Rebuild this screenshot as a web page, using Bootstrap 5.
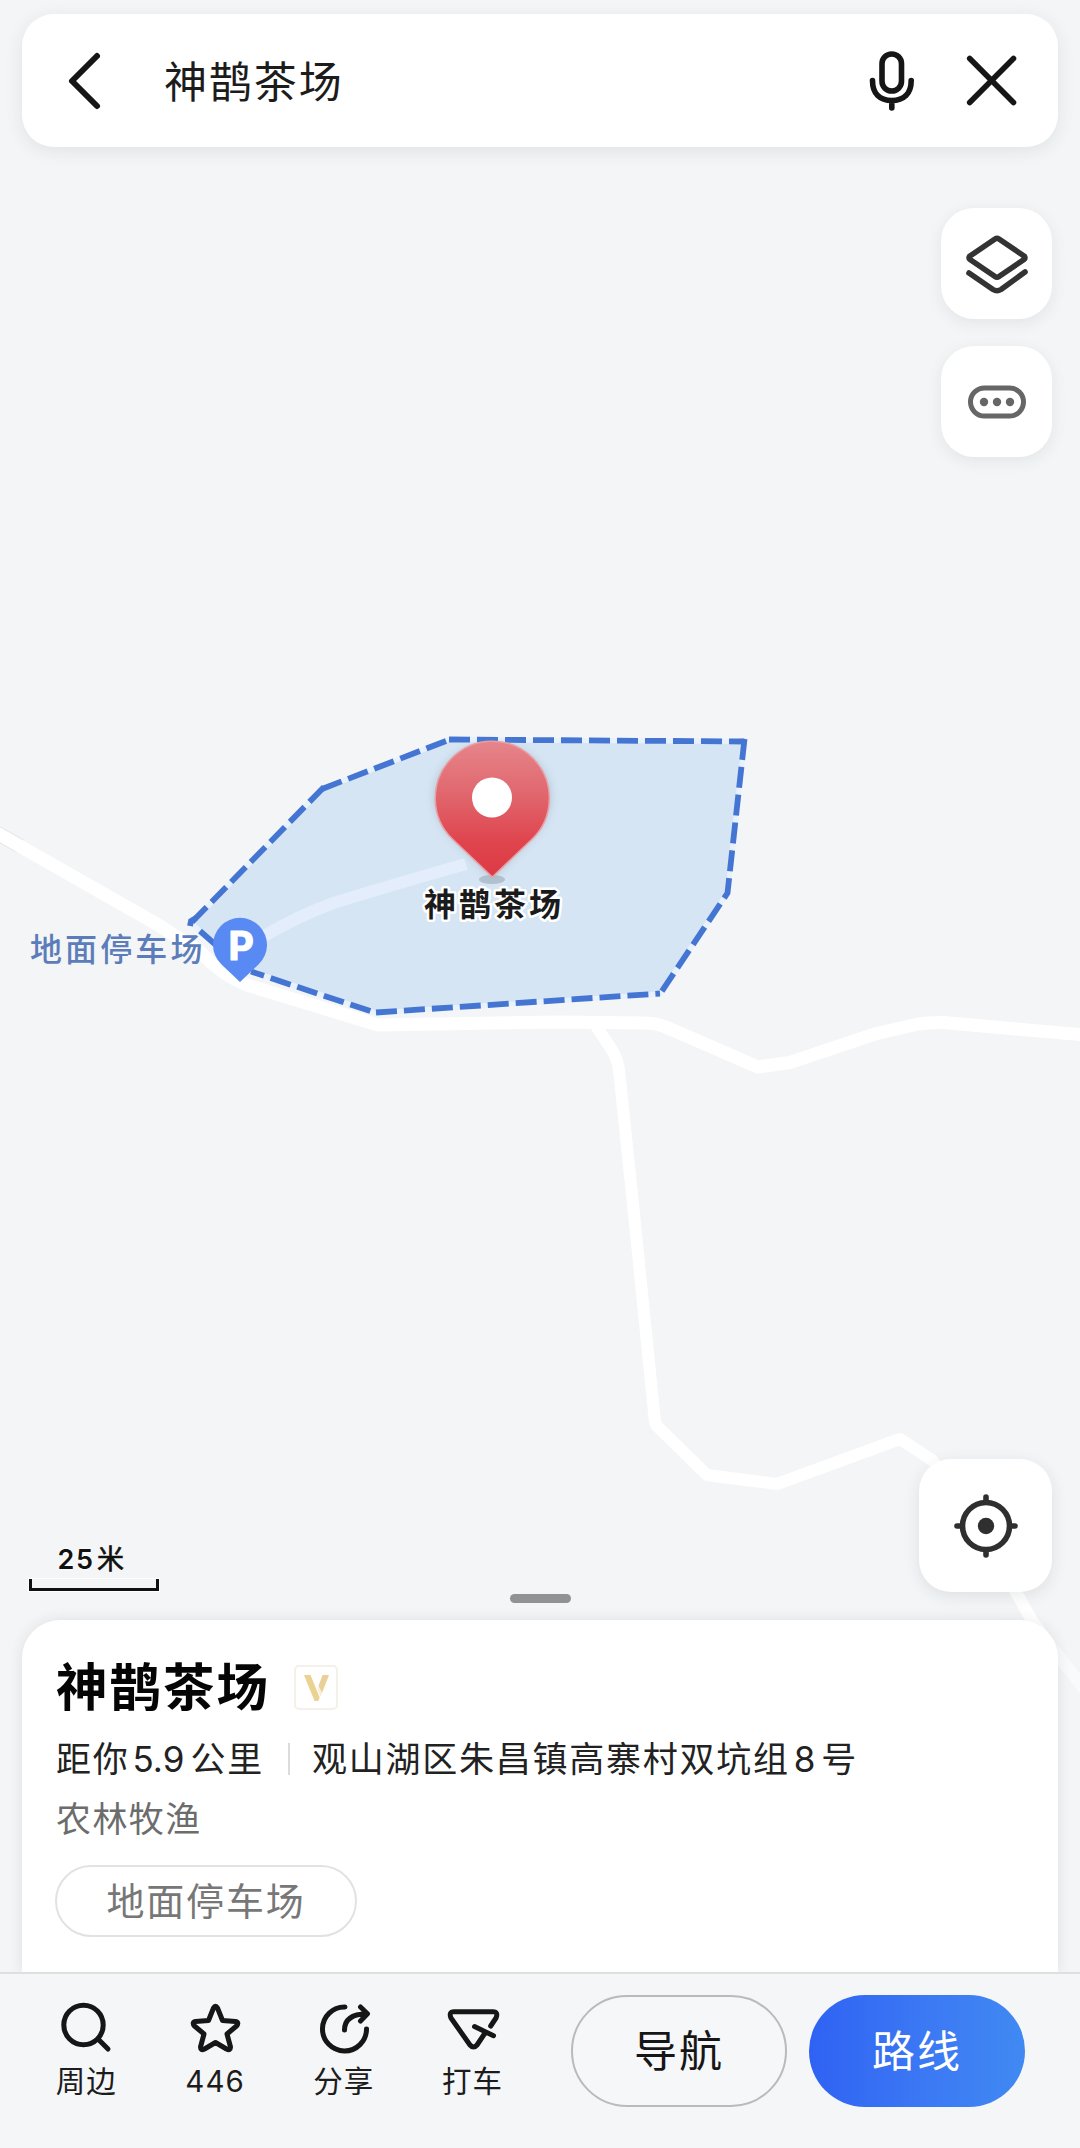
<!DOCTYPE html>
<html lang="zh-CN">
<head>
<meta charset="utf-8">
<meta name="viewport" content="width=device-width, initial-scale=1">
<title>神鹊茶场</title>
<link href="https://cdn.jsdelivr.net/npm/bootstrap@5.3.0/dist/css/bootstrap.min.css" rel="stylesheet">
<style>
body{margin:0;background:#f3f5f7;font-family:Inter,"Noto Sans CJK SC",sans-serif;color:#1c1c1c}
svg{display:block;overflow:visible}
.ico{fill:none;stroke:#161616;stroke-linecap:round;stroke-linejoin:round}
.app-screen{width:1080px;height:2148px;background:#f3f5f7}
.map-canvas{width:1080px;height:2148px;z-index:0}
.map-ui{z-index:1}
.search-box{margin:14px 22px 0;height:133px;border-radius:32px;padding:0 40px 0 40px;box-shadow:0 4px 18px rgba(40,50,50,.09)}
.search-text{font-size:43px;letter-spacing:1.9px;line-height:60px;margin-left:62px;margin-top:3px}
.tool-btn{width:111px;height:111px;border-radius:33px;box-shadow:0 4px 16px rgba(40,50,50,.08)}
.tools{margin:61px 28px 0 0;gap:27px}
.locate-btn{width:133px;height:133px;border-radius:32px;margin-right:28px;box-shadow:0 4px 16px rgba(40,50,50,.1)}
.scale-box{margin:0 0 1px 29px;width:130px}
.scale-text{font-size:27px;font-weight:600;letter-spacing:1.6px;line-height:36px;color:#111;word-spacing:-6px;margin-left:-5px;text-shadow:0 0 3px #fff,0 0 3px #fff}
.scale-text .unit{font-weight:400;-webkit-text-stroke:.6px #111}
.scale-line{height:12px;border:3.5px solid #111;border-top:0;margin-top:1px;box-shadow:0 0 0 1px #fff}
.grabber{width:61px;height:9px;background:#909294;margin-top:2px}
.place-panel{margin:17px 22px 0;height:352px;border-radius:38px 38px 0 0;padding:34px 34px 0;box-shadow:0 0 14px rgba(40,50,50,.1)}
.place-title{font-size:51.5px;font-weight:700;letter-spacing:2px;line-height:66px;color:#050505}
.vip-tag{width:44px;height:45px;border:2px solid #f4f1ea;border-radius:5px;margin:1px 0 0 24px}
.info-line{font-size:35px;letter-spacing:1.75px;line-height:44px;white-space:nowrap;color:#222;margin-top:17px}
.info-line .num{letter-spacing:0;margin-left:3px;margin-right:6px}
.info-line .house{margin:0 6px 0 4px}
.split{width:2px;height:32px;background:#dcdcdc;margin:0 22px 0 24px}
.kind{font-size:35px;letter-spacing:1.4px;line-height:44px;color:#6c6c6c;margin-top:16px}
.chip{width:302px;height:72px;border:2px solid #e2e2e2;margin:24px 0 0 -1px;font-size:38px;letter-spacing:1.8px;color:#777}
.action-bar{height:176px;border-top:2px solid #dce0e0;background:#f5f6f8;padding:21px 55px 0 22px}
.tab-item{width:128.8px;padding-top:6px}
.tab-label{font-size:29.5px;letter-spacing:1.1px;line-height:40px;margin-top:4px}
.pill-btn{width:216px;height:112px;border-radius:56px;font-size:43px;letter-spacing:2px;border:0;padding:0}
.pill-nav{border:2px solid #bababc;background:#f6f7f9;color:#161616;margin-left:34px}
.pill-route{background:linear-gradient(90deg,#2f62f3,#3b77f4 50%,#4089f2);color:#fff;margin-left:22px}
</style>
</head>
<body>
<main class="app-screen position-relative overflow-hidden">
  <svg class="map-canvas position-absolute top-0 start-0" viewBox="0 0 1080 2148">
    <defs>
      <linearGradient id="pinRed" x1="0" y1="0" x2="0" y2="1"><stop offset="0" stop-color="#e6858b"/><stop offset=".35" stop-color="#e16a71"/><stop offset=".75" stop-color="#df444d"/><stop offset="1" stop-color="#dc3a45"/></linearGradient>
      <filter id="soft" x="-30%" y="-30%" width="160%" height="160%"><feGaussianBlur stdDeviation="4"/></filter>
    </defs>
    <g fill="none" stroke="#fff" stroke-width="13" stroke-linejoin="round">
      <path d="M-5 832L20 846" stroke="#e4e6e8" stroke-width="15"/>
      <path d="M-5 832L160 926L200 952Q222 975 247 985L378 1025L560 1022L645 1023Q657 1023 668 1028L758 1067L790 1062.500L875 1034L918 1024Q930 1022 943 1022.500L1085 1035"/>
      <path d="M596 1026L612 1050Q618 1060 619 1070L633 1204L655 1422L657 1426L707 1475L777 1484L900 1439L932 1460L985 1530L1017 1594L1034 1624L1050 1645" stroke-width="12"/>
      <path d="M1050 1645L1085 1690" stroke-width="12" opacity=".5"/>
    </g>
    <path d="M322 789L449 739.500L744.500 741.500L727.500 893L660 994L376 1013L251 971.500L231 963L200 931L191.500 923Z" fill="#d5e5f3" stroke="#e8f2fc" stroke-width="5"/>
    <path d="M264 936Q300 915 335 902.500Q395 884 466 864" fill="none" stroke="#e3edfb" stroke-width="12"/>
    <g fill="none" stroke="#4575d3" stroke-width="5.800" stroke-dasharray="21 7">
      <path d="M449 739.500L744.500 741.500"/>
      <path d="M744.500 739L727.500 893L660 994"/>
      <path d="M376 1012.500L660 993.500"/>
      <path d="M376 1013L251 971.500" stroke-dashoffset="-6"/>
      <path d="M322 789L451 739" />
      <path d="M192 922L324 787"/>
      <path d="M190 926L191 921L196 918M200 931L216 945L232 963" stroke-dasharray="none"/>
    </g>
    <path d="M240 982L221.500 964.500A27 27 0 1 1 258.500 964.500Z" fill="#598af3"/>
    <text x="228.500" y="960" font-family="Inter,sans-serif" font-size="39" font-weight="700" fill="#fff" stroke="#fff" stroke-width="1.200" stroke-linejoin="round">P</text>
    <text x="30" y="961" font-family="'Noto Sans CJK SC',sans-serif" font-size="32" font-weight="500" letter-spacing="3.100" fill="#5c7db9">地面停车场</text>
    <ellipse cx="492" cy="879.500" rx="13" ry="4.500" fill="#b3c2d0"/>
    <path d="M492.300 878L451 836C414 795 444 744 492.300 744S571 795 534 836Z" fill="#8da0b4" opacity=".5" filter="url(#soft)"/>
    <path d="M492.300 877L453 839.500A57 57 0 1 1 531.600 839.500Z" fill="url(#pinRed)" stroke="#eb9da2" stroke-width="1.500" stroke-linejoin="round"/>
    <circle cx="492" cy="797.500" r="20" fill="#fff"/>
    <text x="424" y="916" font-family="'Noto Sans CJK SC',sans-serif" font-size="32" font-weight="700" letter-spacing="3" fill="#1b1b1b" stroke="#fff" stroke-width="5" paint-order="stroke" stroke-linejoin="round">神鹊茶场</text>
  </svg>

  <div class="map-ui position-relative d-flex flex-column h-100">
    <header class="search-box bg-white d-flex align-items-center flex-shrink-0">
      <svg class="ico" width="40" height="64" viewBox="62 48.500 40 64" stroke-width="6"><path d="M97 55.500L72 80.500L97 105.500"/></svg>
      <div class="search-text flex-grow-1">神鹊茶场</div>
      <svg class="ico" width="50" height="64" viewBox="866 49 50 64" stroke-width="5.600"><rect x="882" y="54" width="19.500" height="37" rx="9.700"/><path d="M872.500 80.500C872.500 94 880 100.500 891.800 100.500S911.200 94 911.200 80.500M891.800 101V108"/></svg>
      <svg class="ico ms-5" width="54" height="64" viewBox="964 49 54 64" stroke-width="5.600"><path d="M969.700 58.500L1013.500 102.500M1013.500 58.500L969.700 102.500"/></svg>
    </header>

    <div class="tools d-flex flex-column align-self-end">
      <div class="tool-btn bg-white d-flex align-items-center justify-content-center">
        <svg class="ico" width="64" height="64" viewBox="965 231.500 64 64" style="stroke:#333" stroke-width="5.600"><path d="M999 238.500L1024 255.500Q1026 257.200 1024 259L999 276Q997 277.500 995 276L970 259Q968 257.200 970 255.500L995 238.500Q997 237.200 999 238.500ZM969 272.500L993 289Q997 291.500 1001 289L1025 271.500"/></svg>
      </div>
      <div class="tool-btn bg-white d-flex align-items-center justify-content-center">
        <svg class="ico" width="64" height="40" viewBox="965 381.500 64 40" style="stroke:#666" stroke-width="5"><rect x="970.500" y="387.500" width="53" height="28" rx="14"/><g fill="#666" stroke="none"><circle cx="984" cy="401.500" r="4.200"/><circle cx="997" cy="401.500" r="4.200"/><circle cx="1010" cy="401.500" r="4.200"/></g></svg>
      </div>
    </div>

    <div class="d-flex justify-content-between align-items-end mt-auto">
      <div class="scale-box">
        <div class="scale-text text-center">25 <span class="unit">米</span></div>
        <div class="scale-line"></div>
      </div>
      <div class="locate-btn bg-white d-flex align-items-center justify-content-center">
        <svg class="ico" width="68" height="68" viewBox="-34 -34 68 68" style="stroke:#2f2f2f" stroke-width="5.600"><circle r="23.500"/><path d="M0 -24V-29M0 24V29M-24 0H-29M24 0H29"/><circle r="8.200" fill="#2f2f2f" stroke="none"/></svg>
      </div>
    </div>

    <div class="grabber rounded-pill align-self-center flex-shrink-0"></div>

    <section class="place-panel bg-white flex-shrink-0">
      <div class="d-flex align-items-center">
        <div class="place-title">神鹊茶场</div>
        <div class="vip-tag d-flex align-items-center justify-content-center">
          <svg width="25" height="26" viewBox="0 0 25 26"><path d="M0 0H6.500L15.500 22Q15.500 26 13 26H10.500Z" fill="#ecd290"/><path d="M18.500 0H25L18 18L14.500 11Z" fill="#e9d096"/><path d="M13.500 13L16.500 22L18 18L14.700 12Z" fill="#f8ecdc"/></svg>
        </div>
      </div>
      <div class="info-line d-flex align-items-center">
        <span>距你<span class="num">5.9</span>公里</span>
        <span class="split"></span>
        <span>观山湖区朱昌镇高寨村双坑组<span class="num house">8</span>号</span>
      </div>
      <div class="kind">农林牧渔</div>
      <div class="chip rounded-pill d-flex align-items-center justify-content-center">地面停车场</div>
    </section>

    <footer class="action-bar d-flex align-items-start flex-shrink-0">
      <div class="tab-item d-flex flex-column align-items-center">
        <svg class="ico" width="54" height="56" viewBox="58.500 2001.500 54 56" stroke-width="5"><circle cx="83" cy="2025.500" r="19.700"/><path d="M98 2040L107.500 2049.500"/></svg>
        <div class="tab-label">周边</div>
      </div>
      <div class="tab-item d-flex flex-column align-items-center">
        <svg class="ico" width="54" height="56" viewBox="188.500 2001 54 56" stroke-width="5"><path d="M214 2008Q216 2004.500 218 2008L223 2020.500L236 2021.500Q240 2022.500 237 2026L227.500 2034L231 2047Q231 2051 227 2049L216 2042.500L205 2049Q201 2051 201 2047L204.500 2034L195 2026Q192 2022.500 196 2021.500L209 2020.500Z"/></svg>
        <div class="tab-label">446</div>
      </div>
      <div class="tab-item d-flex flex-column align-items-center">
        <svg class="ico" width="54" height="56" viewBox="317 2001 54 56" stroke-width="5"><path d="M345 2007A22 22 0 1 0 366.500 2029M344.500 2030C344.500 2020 351 2014 367 2013.700M360.500 2007L367.500 2013.700L360.500 2021"/></svg>
        <div class="tab-label">分享</div>
      </div>
      <div class="tab-item d-flex flex-column align-items-center">
        <svg class="ico" width="54" height="56" viewBox="446 2001 54 56" stroke-width="5"><path d="M490.700 2026L496 2018Q498.500 2011.700 493 2011.700H454Q448.500 2011.700 451 2018L470 2045Q473.500 2049 477 2045L485 2033M474.500 2026.500L493.500 2035.700"/></svg>
        <div class="tab-label">打车</div>
      </div>
      <button class="btn pill-btn pill-nav flex-shrink-0">导航</button>
      <button class="btn pill-btn pill-route flex-shrink-0">路线</button>
    </footer>
  </div>
</main>
<script src="https://cdn.jsdelivr.net/npm/bootstrap@5.3.0/dist/js/bootstrap.bundle.min.js"></script>
</body>
</html>
